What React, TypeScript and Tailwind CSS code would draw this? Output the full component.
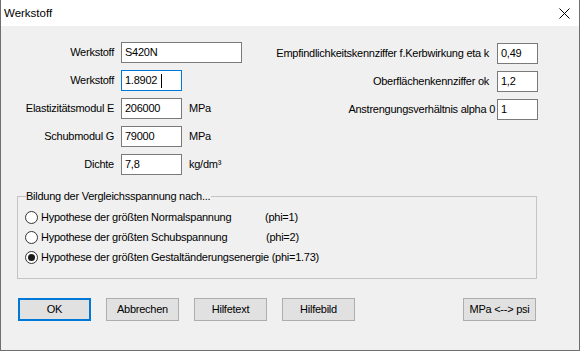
import React from "react";

const field = "h-[21px] border border-[#7a7a7a] bg-white pl-[3px] flex items-center";

function Radio({ checked = false }: { checked?: boolean }) {
  return (
    <span className="w-[13px] h-[13px] rounded-full border border-[#333333] bg-white flex items-center justify-center shrink-0">
      {checked && <span className="w-[7px] h-[7px] rounded-full bg-[#1a1a1a]" />}
    </span>
  );
}

function Button({ label, focused = false }: { label: string; focused?: boolean }) {
  return (
    <div
      className={
        focused
          ? "w-[73px] h-[23px] bg-[#e1e1e1] border-2 border-[#0078d7] flex items-center justify-center"
          : "w-[73px] h-[23px] bg-[#e1e1e1] border border-[#adadad] flex items-center justify-center"
      }
    >
      {label}
    </div>
  );
}

export default function App() {
  return (
    <div className="w-[580px] h-[351px] bg-[#f0f0f0] border-x border-b border-[#6e6e6e] flex flex-col font-['Liberation_Sans',Arial,sans-serif] text-[11px] leading-[13px] text-black">
      {/* Title bar */}
      <div className="h-[26px] bg-white flex items-center justify-between pl-[3px] pr-[9px] shrink-0">
        <span className="text-[11.5px]">Werkstoff</span>
        <svg width="11" height="11" viewBox="0 0 11 11">
          <path d="M0.5 0.5 L10.5 10.5 M10.5 0.5 L0.5 10.5" stroke="#000" strokeWidth="1" fill="none" />
        </svg>
      </div>

      <div className="flex flex-col tracking-[-0.25px]">
        {/* Fields */}
        <div className="flex justify-between pt-[16px] pr-[41px]">
          <div className="grid grid-cols-[113px_auto] gap-x-[7px] gap-y-[7px]">
            <div className="h-[21px] flex items-center justify-end">Werkstoff</div>
            <div className={`${field} w-[121px]`}>S420N</div>

            <div className="h-[21px] flex items-center justify-end">Werkstoff</div>
            <div className="h-[21px] w-[61px] border border-[#0078d7] bg-white pl-[3px] flex items-center">
              1.8902
              <span className="ml-[4px] w-px h-[14px] bg-black" />
            </div>

            <div className="h-[21px] flex items-center justify-end">Elastizitätsmodul E</div>
            <div className="flex items-center gap-[7px]">
              <div className={`${field} w-[61px]`}>206000</div>
              <span>MPa</span>
            </div>

            <div className="h-[21px] flex items-center justify-end">Schubmodul G</div>
            <div className="flex items-center gap-[7px]">
              <div className={`${field} w-[61px]`}>79000</div>
              <span>MPa</span>
            </div>

            <div className="h-[21px] flex items-center justify-end">Dichte</div>
            <div className="flex items-center gap-[7px]">
              <div className={`${field} w-[61px]`}>7,8</div>
              <span>kg/dm³</span>
            </div>
          </div>

          <div className="grid grid-cols-[auto_41px] gap-x-[2px] gap-y-[7px] mt-[1px] h-fit">
            <div className="h-[21px] flex items-center justify-end pr-[6px]">
              Empfindlichkeitskennziffer f.Kerbwirkung eta k
            </div>
            <div className={field}>0,49</div>

            <div className="h-[21px] flex items-center justify-end pr-[6px]">Oberflächenkennziffer ok</div>
            <div className={field}>1,2</div>

            <div className="h-[21px] flex items-center justify-end">Anstrengungsverhältnis alpha 0</div>
            <div className={field}>1</div>
          </div>
        </div>

        {/* Group box */}
        <div className="mt-[21px] ml-[16px] w-[520px] border border-[#c4c4c4] pb-[11px]">
          <div className="-mt-[7px] ml-[8px] pr-[1px] w-fit h-[13px] bg-[#f0f0f0]">
            Bildung der Vergleichsspannung nach...
          </div>
          <div className="mt-[4px] pl-[7px] flex flex-col">
            <div className="h-[20px] flex items-center gap-[3px]">
              <Radio />
              <span className="w-[221px]">Hypothese der größten Normalspannung</span>
              <span>(phi=1)</span>
            </div>
            <div className="h-[20px] flex items-center gap-[3px]">
              <Radio />
              <span className="w-[222px]">Hypothese der größten Schubspannung</span>
              <span>(phi=2)</span>
            </div>
            <div className="h-[20px] flex items-center gap-[3px]">
              <Radio checked />
              <span>Hypothese der größten Gestaltänderungsenergie (phi=1.73)</span>
            </div>
          </div>
        </div>

        {/* Buttons */}
        <div className="mt-[19px] pl-[17px] pr-[43px] flex gap-[15px]">
          <Button label="OK" focused />
          <Button label="Abbrechen" />
          <Button label="Hilfetext" />
          <Button label="Hilfebild" />
          <div className="ml-auto">
            <Button label="MPa <--> psi" />
          </div>
        </div>
      </div>
    </div>
  );
}
